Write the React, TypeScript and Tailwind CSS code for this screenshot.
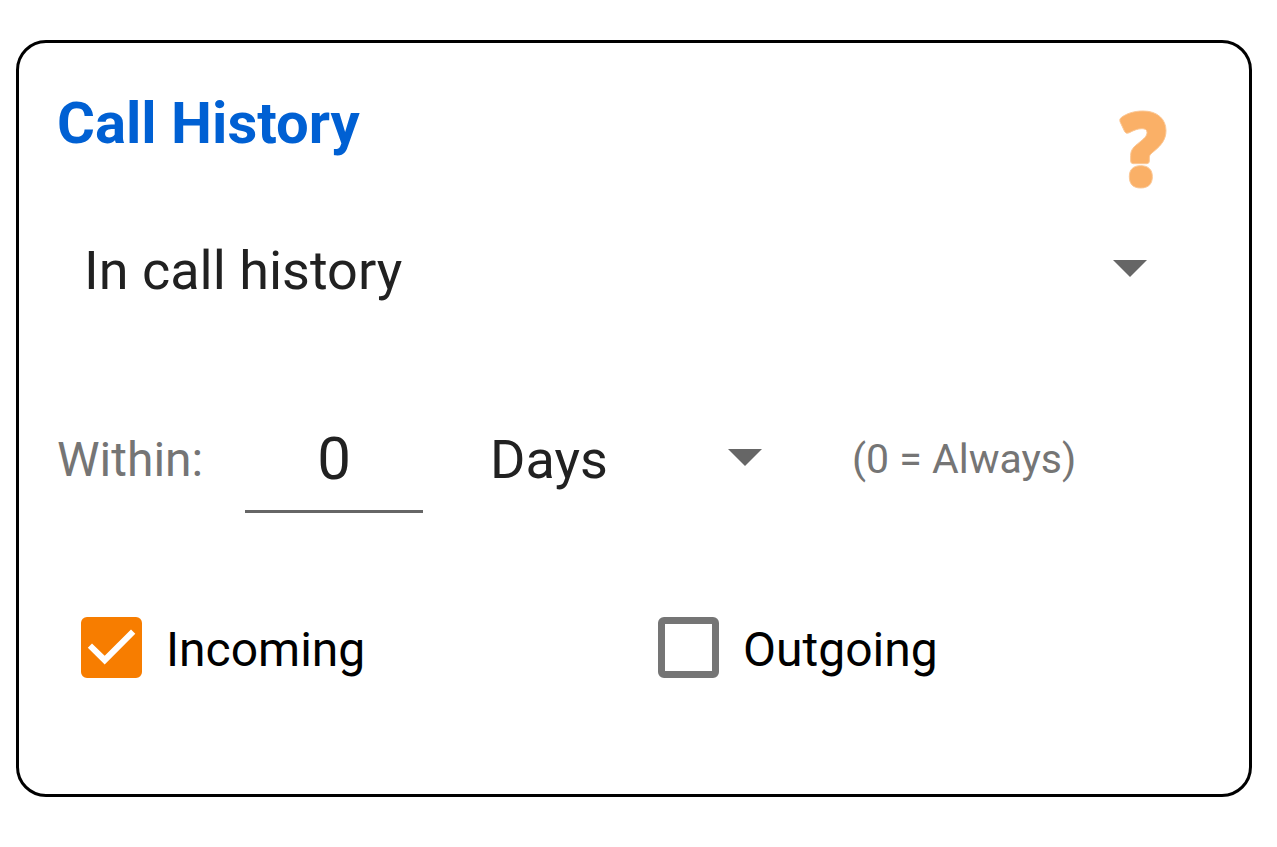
import { useState } from 'react';
import clsx from 'clsx';

interface iSpinner {
  label: string
  options: string[]
  value: string
  onChange: (value: string) => void
  className?: string
  arrowClassName?: string
}

interface iCheckbox {
  label: string
  checked: boolean
  onChange: (checked: boolean) => void
}

const Spinner = ({ label, options, value, onChange, className, arrowClassName }: iSpinner) => (
  <div className={clsx('relative', className)}>
    <select
      aria-label={label}
      className="block h-16 w-full cursor-pointer appearance-none bg-transparent text-[54px] leading-16 text-[#212121] outline-none"
      value={value}
      onChange={(e) => onChange(e.target.value)}
    >
      {options.map((x) => <option key={x} value={x}>{x}</option>)}
    </select>
    <svg
      className={clsx('pointer-events-none absolute top-[21px] h-[17px] w-[34px] fill-[#666666]', arrowClassName)}
      viewBox="0 0 34 17"
      aria-hidden="true"
    >
      <path d="M0 0h34L17 17z" />
    </svg>
  </div>
)

const Checkbox = ({ label, checked, onChange }: iCheckbox) => (
  <label className="flex cursor-pointer items-center pl-6 text-[48px] leading-[57px] text-black">
    <span className="relative mr-6 size-[61px] shrink-0">
      <input
        type="checkbox"
        className="peer block size-full cursor-pointer appearance-none rounded-md border-[7px] border-[#757575] checked:border-[#f77d00] checked:bg-[#f77d00]"
        checked={checked}
        onChange={(e) => onChange(e.target.checked)}
      />
      <svg
        className="pointer-events-none absolute inset-0 hidden size-full fill-white peer-checked:block"
        viewBox="0 0 61 61"
        aria-hidden="true"
      >
        <path d="M11 26.4 6.8 30.7 23.7 47.5 54.3 16.7 50 12.4 23.7 38.8z" />
      </svg>
    </span>
    <span className="pt-1">{label}</span>
  </label>
)

const HelpIcon = () => (
  <svg className="h-[79px] w-12" viewBox="86 60 144 237" fill="#fab067" stroke="#fbc794" strokeWidth="3" aria-hidden="true">
    <path d="M91 84C108 70 132 63 158 63C201 63 227 87 227 122C227 149 212 166 193 182C180 193 177 195 177 204V213Q177 221 169 221H129Q121 221 121 213V197C121 178 131 170 146 158C161 146 170 139 170 127C170 119 164 116 155 116C142 116 130 121 117 128Q108 133 103 125L89 95Q87 88 91 84Z" />
    <path d="M151 227C174 227 186 239 186 260C186 282 174 294 151 294C128 294 117 282 117 260C117 239 128 227 151 227Z" />
  </svg>
)

const App = () => {
  const [history, setHistory] = useState<string>('In call history')
  const [within, setWithin] = useState<string>('0')
  const [unit, setUnit] = useState<string>('Days')
  const [incoming, setIncoming] = useState<boolean>(true)
  const [outgoing, setOutgoing] = useState<boolean>(false)

  return (
    <main className="bg-white pt-10 pr-[25px] pb-12 pl-4 font-[Roboto,sans-serif]">
      <section className="rounded-[30px] border-3 border-black px-[38px] pt-[46px] pb-[116px]">
        <div className="flex h-25 justify-between">
          <h1 className="text-[58px] leading-[68px] font-bold text-[#0060d3]">Call History</h1>
          <button type="button" aria-label="Help" className="mr-11 cursor-pointer self-end">
            <HelpIcon />
          </button>
        </div>
        <Spinner
          label="Call history filter"
          className="mt-[50px] pl-[27px]"
          arrowClassName="right-16"
          options={['In call history', 'Not in call history']}
          value={history}
          onChange={setHistory}
        />
        <div className="mt-[104px] flex items-center">
          <label htmlFor="within" className="w-[188px] text-[48px] text-[#757575]">Within:</label>
          <input
            id="within"
            type="text"
            inputMode="numeric"
            className="h-[106px] w-[178px] border-b-3 border-[#666666] text-center text-[60px] text-[#212121] outline-none"
            value={within}
            onChange={(e) => setWithin(e.target.value)}
          />
          <Spinner
            label="Time unit"
            className="ml-[67px] w-[272px]"
            arrowClassName="right-0"
            options={['Days', 'Hours', 'Weeks']}
            value={unit}
            onChange={setUnit}
          />
          <span className="ml-[90px] text-[41px] text-[#757575]">(0 = Always)</span>
        </div>
        <div className="mt-[104px] grid grid-cols-2">
          <Checkbox label="Incoming" checked={incoming} onChange={setIncoming} />
          <Checkbox label="Outgoing" checked={outgoing} onChange={setOutgoing} />
        </div>
      </section>
    </main>
  );
};

export default App
